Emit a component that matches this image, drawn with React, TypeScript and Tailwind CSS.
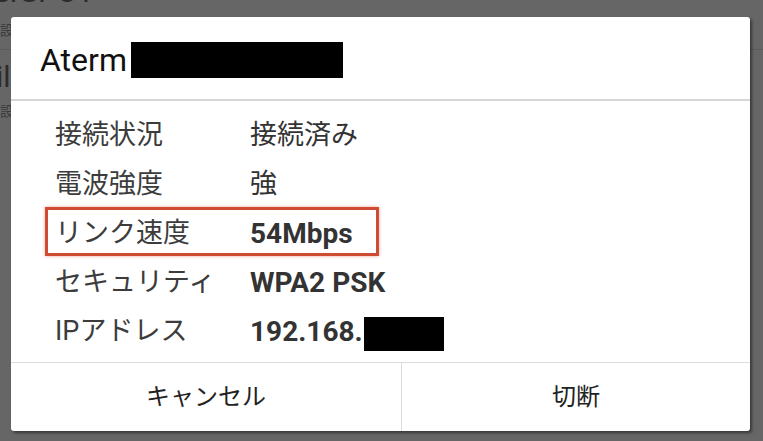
const font = { fontFamily: '"Roboto", "Noto Sans CJK JP", sans-serif' };

const rows = [
  { label: "接続状況", value: "接続済み", bold: false },
  { label: "電波強度", value: "強", bold: false },
  { label: "リンク速度", value: "54Mbps", bold: true, marked: true },
  { label: "セキュリティ", value: "WPA2 PSK", bold: true },
  { label: "IPアドレス", value: "192.168.", bold: true, masked: true },
];

export default function App() {
  return (
    <div
      className="relative w-[763px] h-[441px] overflow-hidden bg-[#666666]"
      style={font}
    >
      {/* dimmed settings list behind the dialog */}
      <div className="flex flex-col text-[#2b2b2b] -mt-[27px]">
        <div className="h-[77px] border-b border-[#5a5a5a] pt-[2px]">
          <p className="text-[30px] leading-[34px] -ml-[6px]">erSPOT</p>
          <p className="text-[14px] leading-[18px] mt-[12px] text-[#3a3a3a]">設置</p>
        </div>
        <div className="h-[78px] pt-[10px]">
          <p className="text-[30px] leading-[34px] -ml-[4px]">il</p>
          <p className="text-[14px] leading-[18px] mt-[8px] text-[#3a3a3a]">設置</p>
        </div>
      </div>

      {/* dialog */}
      <div className="absolute left-[11px] top-[17px] w-[739px] h-[414px] bg-white rounded-[3px] shadow-[2px_2px_3px_rgba(0,0,0,0.45)] flex flex-col">
        <div className="h-[82px] flex items-center pl-[29px] pt-[4px]">
          <span className="text-[32px] text-[#111111] leading-none">Aterm</span>
          <span className="inline-block w-[212px] h-[36px] bg-black ml-[4px]" />
        </div>
        <div className="h-[2px] bg-[#d6d6d6]" />

        <div className="flex-1 flex flex-col pt-[10px]">
          {rows.map((r) => (
            <div
              key={r.label}
              className="relative h-[49px] flex items-center pl-[44px]"
            >
              {r.marked && (
                <div className="absolute left-[34px] top-[-2px] w-[334px] h-[49px] border-[3px] border-[#cf4b33] shadow-[0_0_3px_rgba(207,75,51,0.5)]" />
              )}
              <span className="w-[195px] text-[27px] text-[#3c3c3c] leading-none">
                {r.label}
              </span>
              <span
                className={
                  r.bold
                    ? "text-[28px] font-bold text-[#333333] leading-none"
                    : "text-[27px] text-[#333333] leading-none"
                }
              >
                {r.value}
              </span>
              {r.masked && (
                <span className="inline-block w-[80px] h-[34px] bg-black ml-[1px] mt-[4px]" />
              )}
            </div>
          ))}
        </div>

        <div className="h-[69px] border-t border-[#dcdcdc] flex">
          <button className="w-[391px] border-r border-[#dcdcdc] flex items-center justify-center text-[24px] text-[#222222]">
            キャンセル
          </button>
          <button className="flex-1 flex items-center justify-center text-[24px] text-[#222222]">
            切断
          </button>
        </div>
      </div>
    </div>
  );
}
